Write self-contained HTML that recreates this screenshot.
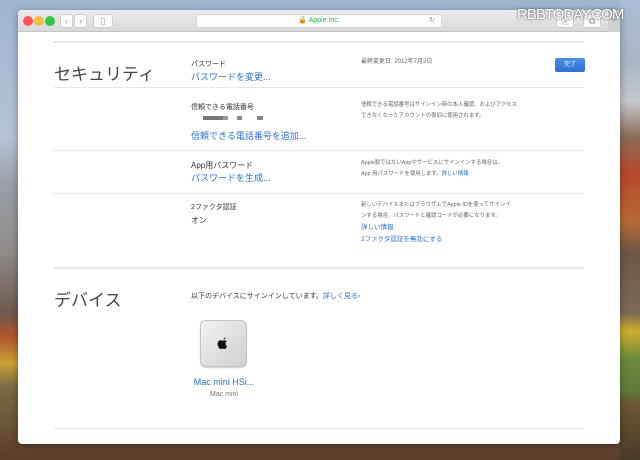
<!DOCTYPE html>
<html><head><meta charset="utf-8"><style>
*{margin:0;padding:0;box-sizing:border-box}
body{width:640px;height:460px;overflow:hidden;position:relative;font-family:"Liberation Sans","Noto Sans CJK JP",sans-serif;
background:linear-gradient(180deg,#9fb4cf 0%,#b4c3d6 30%,#9aa0a8 40%,#8e8a88 55%,#6e5a4c 68%,#b0532c 73%,#c9a134 79%,#7d6a44 84%,#5a3e2a 100%);}
.rbg{position:absolute;left:620px;top:0;width:20px;height:460px;background:linear-gradient(180deg,#a9bbd4 0%,#aab6c6 14%,#c5c8cc 22%,#8a6a58 30%,#b6482a 38%,#b86a34 48%,#6e5644 55%,#7b6a55 68%,#cfae2c 72%,#6a8a3c 78%,#5e7a38 85%,#6b5533 88%,#4a3a28 100%)}
.win{position:absolute;left:18px;top:10px;width:602px;height:434px;background:#fff;border-radius:4px;overflow:hidden;box-shadow:0 2px 8px rgba(0,0,0,.35)}
.tb{position:absolute;left:0;top:0;width:602px;height:22px;background:linear-gradient(#ececec,#d9d9d9);border-bottom:1px solid #c4c4c4}
.dot{position:absolute;top:6px;width:10px;height:10px;border-radius:50%}
.btn{position:absolute;top:4px;height:14px;background:#fbfbfb;border:1px solid #cfcfcf;border-radius:3px;font-size:9px;color:#999;text-align:center;line-height:12px}
.url{position:absolute;left:178px;top:4px;width:246px;height:14px;background:#fdfdfd;border-radius:3px;border:1px solid #d6d6d6;font-size:7px;color:#2bb24c;text-align:center;line-height:12px}
.c{position:absolute;font-size:7px;color:#333}
.b{color:#2a6fd6}
.hr{position:absolute;left:36px;width:530px;height:1px;background:#e6e6e6}
.g{color:#666;font-size:5.4px;line-height:11px}
h2{position:absolute;font-weight:normal;font-size:17px;color:#444}
</style></head><body>
<div class="rbg"></div>
<div class="win">
<div class="tb">
<div class="dot" style="left:5px;background:#fc5753"></div>
<div class="dot" style="left:16px;background:#fdbc40"></div>
<div class="dot" style="left:27px;background:#33c748"></div>
<div class="btn" style="left:42px;width:13px">‹</div>
<div class="btn" style="left:56px;width:13px">›</div>
<div class="btn" style="left:75px;width:20px">▯</div>
<div class="url">🔒 Apple Inc.<span style="position:absolute;right:6px;color:#888">↻</span></div>
<div class="btn" style="left:538px;width:18px">⎘</div>
<div class="btn" style="left:565px;width:18px">⧉</div>
<div style="position:absolute;left:590px;top:0;width:12px;height:22px;background:#d0d0d0;color:#999;font-size:10px;text-align:center;line-height:22px">+</div>
</div>
<div class="hr" style="top:31px;height:2px"></div>
<h2 style="left:36px;top:50px">セキュリティ</h2>
<div class="c" style="left:173px;top:49px">パスワード</div>
<div class="c b" style="left:173px;top:60px;font-size:9px">パスワードを変更...</div>
<div class="c g" style="left:343px;top:47px;font-size:6px">最終変更日: 2012年7月2日</div>
<div style="position:absolute;left:537px;top:48px;width:30px;height:14px;background:linear-gradient(#4d8fe8,#2f6fd0);border-radius:2px;color:#fff;font-size:6px;text-align:center;line-height:14px">完了</div>
<div class="hr" style="top:77px"></div>
<div class="c" style="left:173px;top:92px">信頼できる電話番号</div>
<div style="position:absolute;left:185px;top:106px;width:20px;height:4px;background:#777"></div>
<div style="position:absolute;left:205px;top:106px;width:5px;height:4px;background:#999"></div>
<div style="position:absolute;left:219px;top:106px;width:5px;height:4px;background:#888"></div>
<div style="position:absolute;left:239px;top:106px;width:6px;height:4px;background:#888"></div>
<div class="c b" style="left:173px;top:119px;font-size:9px">信頼できる電話番号を追加...</div>
<div class="c g" style="left:343px;top:90px">信頼できる電話番号はサインイン時の本人確認、およびアクセス<br>できなくなったアカウントの復旧に使用されます。</div>
<div class="hr" style="top:140px"></div>
<div class="c" style="left:173px;top:150px;font-size:8px">App用パスワード</div>
<div class="c b" style="left:173px;top:161px;font-size:9px">パスワードを生成...</div>
<div class="c g" style="left:343px;top:148px">Apple製ではないAppやサービスにサインインする場合は、<br>App 用パスワードを使用します。<span class="b">詳しい情報</span></div>
<div class="hr" style="top:183px"></div>
<div class="c" style="left:173px;top:192px">2ファクタ認証</div>
<div class="c" style="left:173px;top:205px;font-size:8px">オン</div>
<div class="c g" style="left:343px;top:190px">新しいデバイスまたはブラウザ上でApple IDを使ってサインイ<br>ンする場合、パスワードと確認コードが必要になります。<br><span class="b" style="font-size:6.5px">詳しい情報</span><br><span class="b" style="font-size:6.5px">2ファクタ認証を無効にする</span></div>
<div class="hr" style="top:257px;height:2px"></div>
<h2 style="left:36px;top:276px">デバイス</h2>
<div class="c" style="left:173px;top:281px">以下のデバイスにサインインしています。<span class="b">詳しく見る›</span></div>
<div style="position:absolute;left:182px;top:310px;width:47px;height:47px;border-radius:6px;background:linear-gradient(135deg,#f2f2f2,#cfcfcf);border:1px solid #c4c4c4;box-shadow:0 1px 1px rgba(0,0,0,.2)">
<svg width="47" height="47" viewBox="0 0 47 47" style="position:absolute;left:-1px;top:-1px"><path d="M23.5 19.5c1-.1 2-.7 2.3-2-1.1.1-2.1.8-2.3 2zM20.6 20.3c-1.7 0-3 1.5-3 3.6 0 2.3 1.6 5.1 3 5.1.7 0 1.1-.4 2-.4s1.2.4 2 .4c1 0 2-1.4 2.5-2.8-1-.5-1.6-1.4-1.6-2.5 0-1 .5-1.8 1.3-2.3-.6-.8-1.4-1.2-2.3-1.2-.9 0-1.5.5-2 .5s-1.1-.5-1.9-.4z" fill="#111"/></svg></div>
<div class="c b" style="left:170px;top:367px;width:72px;text-align:center;font-size:9px">Mac mini HSi...</div>
<div class="c" style="left:170px;top:381px;width:72px;text-align:center;color:#777">Mac mini</div>
<div class="hr" style="top:418px"></div>
</div>
<div style="position:absolute;left:517px;top:6px;font-size:15px;color:#fff;letter-spacing:-1px;text-shadow:0 0 2px #333">RBBTODAY.COM</div>
</body></html>
